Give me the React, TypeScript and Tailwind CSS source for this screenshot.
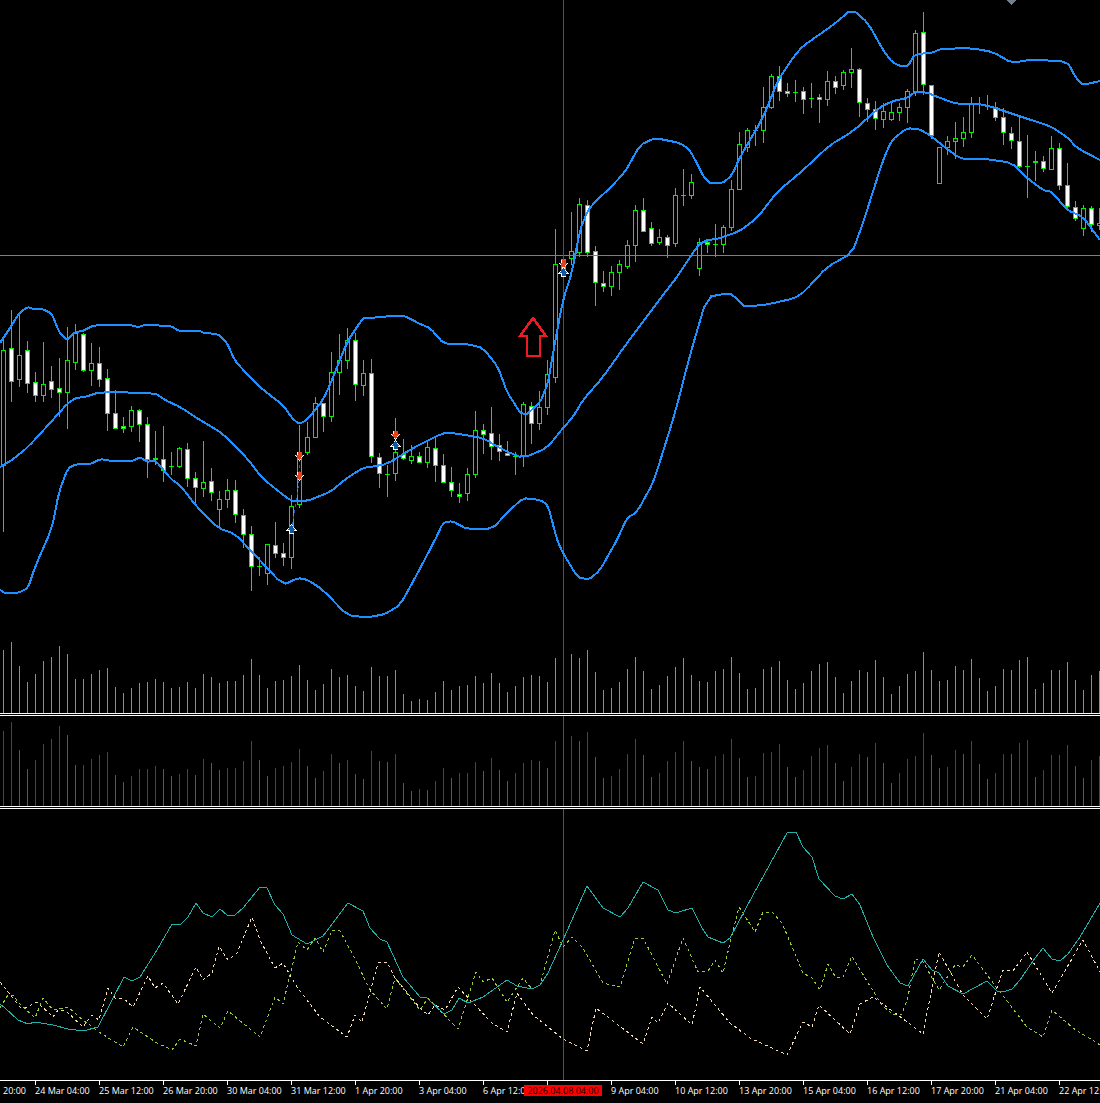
const CANDLES: [number, number, number, number, number][] = [
[340,350,465,532,0],[310,348,381,402,1],[315,355,379,387,0],[341,350,383,393,1],[372,382,395,402,1],[342,384,395,402,0],[366,381,389,398,1],[358,388,392,417,1],
[327,360,392,429,0],[324,333,362,370,0],[333,334,370,372,1],[343,363,370,386,0],[347,363,379,387,1],[369,378,413,431,1],[390,413,428,429,1],[417,426,428,433,1],
[406,410,426,432,0],[409,410,424,442,1],[417,424,459,478,1],[431,458,459,465,0],[426,459,470,482,1],[452,466,466,475,0],[447,448,466,468,0],[443,449,478,487,1],
[472,478,487,503,1],[441,482,488,497,0],[468,481,492,501,1],[491,499,509,527,0],[479,490,499,508,0],[480,490,514,523,1],[509,515,534,548,1],[526,534,566,591,1],
[557,566,566,576,0],[544,544,573,585,0],[522,545,553,558,1],[543,553,557,566,1],[495,506,557,569,0],[425,452,504,508,0],[422,437,452,455,0],[397,403,437,438,0],
[403,403,416,432,1],[352,372,416,422,0],[334,360,372,395,0],[328,340,360,369,0],[333,340,384,401,1],[360,373,385,396,0],[359,373,456,463,1],[453,457,473,488,1],
[465,474,474,497,0],[418,452,473,481,0],[439,454,458,460,1],[445,456,460,464,0],[452,456,462,463,1],[441,447,462,468,0],[438,448,465,482,1],[454,465,482,483,1],
[467,482,490,497,1],[483,494,496,503,1],[468,474,493,501,0],[411,430,474,478,0],[424,430,434,454,1],[407,433,446,460,1],[434,445,451,461,1],[441,453,455,456,1],
[452,456,456,475,0],[402,404,456,467,0],[402,406,423,444,1],[391,407,423,430,0],[360,374,407,415,0],[229,264,377,383,0],[258,259,274,280,0],[212,251,258,265,0],
[198,204,252,257,0],[200,205,252,257,1],[246,251,282,306,1],[271,283,286,292,1],[266,272,286,296,0],[260,264,272,290,0],[240,245,266,269,0],[205,210,245,262,0],
[198,210,231,232,1],[222,228,243,246,1],[229,237,242,245,0],[235,237,245,258,1],[188,195,243,247,0],[169,195,195,206,0],[174,182,195,199,0],[238,242,268,276,0],
[240,242,244,253,1],[224,244,244,257,0],[225,227,244,253,0],[180,189,227,231,0],[132,144,189,190,0],[128,130,147,152,0],[125,130,130,146,0],[87,107,130,143,0],
[74,76,107,109,0],[66,76,91,101,1],[83,91,93,97,1],[80,92,92,102,0],[87,91,99,114,1],[83,98,98,108,0],[94,97,99,123,1],[71,81,99,106,0],[76,81,87,94,1],
[70,72,85,90,0],[48,69,72,88,0],[68,69,102,117,1],[98,103,109,122,1],[101,109,118,130,1],[103,111,119,128,0],[102,112,119,121,0],[103,107,112,121,0],[89,91,107,123,0],
[30,33,91,96,0],[12,32,84,95,1],[85,85,135,139,1],[147,147,183,184,0],[136,141,147,155,0],[122,138,141,159,0],[117,132,138,147,0],[97,104,132,138,0],[97,104,104,114,0],
[95,106,106,110,0],[102,107,117,121,1],[108,117,132,145,1],[127,133,140,149,1],[117,141,166,168,1],[135,166,166,198,0],[151,161,162,181,0],[156,161,168,172,1],
[136,148,169,169,0],[143,148,185,190,1],[163,185,206,208,1],[201,207,218,221,1],[205,208,228,236,0],[206,208,224,232,1],[208,223,225,230,0],
];

const V1 = [30,7,78,126,102,63,51,18,42,117,117,102,90,84,141,159,144,129,126,117,126,144,141,126,144,102,111,129,123,123,105,57,105,144,123,120,108,75,120,150,132,87,111,105,138,153,81,108,108,90,162,183,177,180,156,123,150,138,135,108,129,99,129,156,138,111,105,108,126,54,45,42,54,30,96,150,144,126,87,51,93,147,135,108,81,54,105,123,126,93,87,51,99,147,144,87,81,63,120,147,129,93,72,66,111,159,123,90,96,60,111,162,138,102,93,36,90,123,120,78,90,57,114,153,138,87,90,60,51,147,129,90,90,66,120,150,105,93];
const V2 = [273,246,330,387,360,312,297,258,285,375,375,357,345,336,405,426,408,387,387,378,387,408,402,387,405,357,369,390,384,384,363,303,360,408,384,378,366,327,378,414,393,342,369,360,402,417,333,363,366,342,429,453,447,450,423,384,414,399,399,366,393,354,390,423,399,369,360,363,384,303,290,288,303,276,351,414,408,387,342,297,345,411,399,363,336,303,363,381,387,348,342,297,354,411,408,339,336,312,381,411,390,348,324,315,369,423,381,342,351,309,369,429,399,357,348,279,345,384,381,330,342,303,372,417,399,342,342,309,300,411,390,345,345,315,378,414,360,348];
const RED = new Set([2,3,8,9,14,15,20,21,24,26,27,32,33,38,39,42,44,45,47,48,50,51,53,56,60,62,63,67,68,72,74,75,80,81,86,87,88,92,93,98,99,104,105,108,110,111,116,117,120,122,123,126,129,134,135]);

const UPPER = "0,343 10,328 20,312 28,307 33,309 43,309 52,314 59,332 67,340 75,332 83,331 92,326 100,325 130,325 138,327 145,325 172,326 178,331 200,331 204,333 218,334 227,343 235,361 248,375 262,389 283,405 292,418 299,424 307,420 323,400 332,380 347,342 363,318 370,318 403,315 420,324 430,328 444,344 467,344 483,348 498,367 507,392 523,417 540,403 548,383 555,342 563,300 572,272 580,230 588,210 597,200 610,188 625,172 640,145 655,138 680,143 690,150 707,183 723,183 732,175 740,157 763,118 778,80 795,55 803,46 833,25 852,9 868,23 883,50 892,62 900,66 908,66 915,54 932,53 940,49 970,48 993,52 1012,63 1028,60 1067,61 1076,78 1083,85 1100,81";
const MIDDLE = "0,467 12,460 28,447 50,423 68,403 76,398 85,397 100,392 155,393 165,400 180,407 200,420 222,433 247,458 262,478 287,498 293,501 307,501 330,492 347,478 363,468 370,467 387,464 413,448 443,433 453,433 483,438 503,450 523,458 547,448 563,428 573,417 583,400 603,377 627,343 663,295 677,277 698,245 707,240 717,239 740,231 758,217 777,192 800,173 830,145 852,132 880,107 893,101 907,98 915,92 925,92 943,99 957,104 983,104 1028,119 1050,126 1067,137 1077,148 1100,160";
const LOWER = "0,590 5,593 18,593 28,588 35,567 52,528 59,492 68,468 77,464 91,464 100,459 112,461 133,461 140,457 147,462 155,460 172,480 180,485 197,507 218,528 235,534 253,553 283,585 298,578 308,580 323,590 348,616 370,617 385,614 400,605 415,578 435,540 443,523 452,521 467,529 492,529 508,512 523,498 540,500 548,505 557,540 563,553 578,578 590,579 600,570 617,540 627,518 637,512 653,483 662,455 675,413 690,355 707,297 730,293 738,300 745,307 770,304 795,298 805,291 827,267 852,253 863,223 883,160 892,140 907,128 923,130 955,155 963,159 987,159 1012,163 1027,178 1043,190 1052,192 1067,210 1083,217 1100,240";

const TEAL = "0,1004 5,1008 18,1020 28,1024 35,1022 53,1025 68,1029 83,1031 98,1027 124,977 132,981 140,977 157,950 172,924 180,925 188,917 196,903 203,913 212,917 220,909 227,915 235,915 243,908 260,887 267,888 275,905 283,914 292,935 307,944 323,936 348,903 363,911 370,928 380,939 387,942 403,977 420,997 427,998 444,1014 452,1010 459,998 468,1003 483,997 507,980 517,986 532,989 540,985 548,973 563,940 587,886 603,908 620,917 628,908 643,882 658,890 668,910 676,913 692,908 702,928 708,937 723,943 730,938 753,895 787,833 796,832 803,847 812,857 819,879 835,896 843,899 852,894 860,905 873,937 887,965 900,983 908,986 923,959 932,970 939,973 948,986 963,994 987,981 997,991 1003,992 1012,989 1020,980 1035,958 1043,948 1052,959 1060,961 1068,954 1080,937 1100,903";
const YELLOW = "0,1008 8,995 13,995 18,1002 35,1018 43,998 53,1010 68,1007 83,1020 99,1032 123,1047 133,1027 157,1043 172,1050 180,1039 196,1046 203,1014 220,1028 228,1011 260,1037 275,997 283,1004 298,942 307,950 315,938 323,952 332,930 340,931 353,955 370,990 387,1009 395,978 420,1010 428,998 458,1029 476,972 483,982 492,978 507,1002 523,978 532,989 540,985 555,930 563,947 572,937 583,948 603,983 620,987 635,938 643,938 667,984 683,938 698,972 708,971 715,960 723,973 730,943 739,907 755,932 763,912 772,912 782,923 803,973 812,978 820,990 828,964 836,978 843,977 852,956 868,983 882,1005 893,1015 902,1014 908,997 915,959 923,962 939,990 955,965 963,967 972,955 997,988 1027,1027 1043,1037 1052,1010 1073,1028 1100,1045";
const WHEAT = "0,982 20,1007 27,1007 37,1002 53,1017 58,1010 65,1010 83,1027 92,1015 99,1020 108,988 115,998 123,998 133,1007 148,976 155,988 163,983 178,1004 196,967 203,980 212,973 219,946 228,960 237,953 252,917 260,940 275,968 283,963 297,987 320,1017 347,1037 355,1015 362,1022 370,992 378,963 387,962 395,978 420,1008 428,1015 435,1005 445,1010 458,987 492,1023 507,1032 517,993 533,1015 563,1039 587,1051 596,1008 643,1044 652,1017 658,1023 668,1003 692,1025 700,987 730,1023 750,1038 787,1055 803,1022 812,1027 819,1005 850,1034 860,1004 873,997 902,1018 923,1034 939,952 963,995 987,1019 1003,970 1013,971 1027,952 1052,993 1083,940 1100,972";

const LABELS = ["24 Mar 04:00","25 Mar 12:00","26 Mar 20:00","30 Mar 04:00","31 Mar 12:00","1 Apr 20:00","3 Apr 04:00","6 Apr 12:00","","9 Apr 04:00","10 Apr 12:00","13 Apr 20:00","15 Apr 04:00","16 Apr 12:00","17 Apr 20:00","21 Apr 04:00","22 Apr 12:00"];

const CROSS = "#f01010";
const GREEN = "#00f000";

// Softens the corners of a band line so that it reads as a curve.
function soften(points: string, r = 0.18): string {
  const p = points.split(" ").map((s) => s.split(",").map(Number));
  const out: string[] = [p[0].join(",")];
  for (let i = 0; i < p.length - 1; i++) {
    const [x0, y0] = p[i];
    const [x1, y1] = p[i + 1];
    out.push(`${x0 + (x1 - x0) * r},${y0 + (y1 - y0) * r}`);
    out.push(`${x1 - (x1 - x0) * r},${y1 - (y1 - y0) * r}`);
  }
  out.push(p[p.length - 1].join(","));
  return out.join(" ");
}

function Marker({ x, y, kind }: { x: number; y: number; kind: "up" | "down" }) {
  const pts =
    kind === "down"
      ? `${x - 1.5},${y - 4} ${x + 2.5},${y - 4} ${x + 2.5},${y - 1} ${x + 4.5},${y - 1} ${x + 0.5},${y + 4} ${x - 3.5},${y - 1} ${x - 1.5},${y - 1}`
      : `${x - 1.5},${y + 4} ${x + 2.5},${y + 4} ${x + 2.5},${y + 1} ${x + 4.5},${y + 1} ${x + 0.5},${y - 4} ${x - 3.5},${y + 1} ${x - 1.5},${y + 1}`;
  const fill = kind === "down" ? "#e8401c" : "#0f5aa8";
  return (
    <g>
      <polygon points={pts} fill="#ffffff" stroke="#ffffff" strokeWidth={1} />
      <polygon points={pts} fill={fill} />
    </g>
  );
}

function MainChart() {
  return (
    <svg width={1100} height={713} viewBox="0 0 1100 713" shapeRendering="crispEdges" className="block flex-none">
      {V1.map((y, i) => (
        <rect key={i} x={3 + 8 * i} y={640 + y / 3} width={1} height={(220 - y) / 3} fill="#3cc83c" />
      ))}
      {CANDLES.map(([hi, top, bot, lo, filled], i) => {
        const cx = 3 + 8 * i;
        return (
          <g key={i}>
            <rect x={cx} y={hi} width={1} height={lo - hi} fill={GREEN} />
            {bot - top < 1 ? (
              <rect x={cx - 2} y={top} width={5} height={1} fill={GREEN} />
            ) : (
              <rect x={cx - 1.5} y={top + 0.5} width={4} height={bot - top} fill={filled ? "#ffffff" : "#000000"} stroke={GREEN} strokeWidth={1} />
            )}
          </g>
        );
      })}
      <rect x={0} y={255} width={1100} height={1} fill="#808080" />
      <rect x={563} y={0} width={1} height={713} fill={CROSS} />
      <polyline points="292.5,525 299.5,478" fill="none" stroke="#1a5fa8" strokeWidth={1} strokeDasharray="3 3" />
      <polyline points="299.5,474 299.5,459" fill="none" stroke="#1a5fa8" strokeWidth={1} strokeDasharray="3 3" />
      <polyline points={soften(UPPER)} fill="none" stroke="#1e90ff" strokeWidth={2} />
      <polyline points={soften(MIDDLE)} fill="none" stroke="#1e90ff" strokeWidth={2} />
      <polyline points={soften(LOWER)} fill="none" stroke="#1e90ff" strokeWidth={2} />
      <Marker x={299} y={456} kind="down" />
      <Marker x={299} y={476} kind="down" />
      <Marker x={291} y={529} kind="up" />
      <Marker x={395} y={435} kind="down" />
      <Marker x={395} y={445} kind="up" />
      <Marker x={563} y={264} kind="down" />
      <Marker x={563} y={272} kind="up" />
      <polygon points="533,318 520,336 527,336 527,356 540,356 540,336 546,336" fill="none" stroke="#ed1c24" strokeWidth={2.5} strokeLinejoin="miter" />
      <polygon points="1006,0 1016,0 1011,5" fill="#708090" />
    </svg>
  );
}

function VolumePanel() {
  return (
    <svg width={1100} height={90} viewBox="0 716 1100 90" shapeRendering="crispEdges" className="block flex-none">
      {V2.map((y, i) => (
        <rect key={i} x={3 + 8 * i} y={640 + y / 3} width={1} height={(498 - y) / 3} fill={RED.has(i) ? "#f01818" : "#0a720a"} />
      ))}
      <rect x={563} y={716} width={1} height={90} fill={CROSS} />
    </svg>
  );
}

function Oscillator() {
  return (
    <svg width={1100} height={271} viewBox="0 809 1100 271" shapeRendering="crispEdges" className="block flex-none">
      <rect x={563} y={809} width={1} height={271} fill={CROSS} />
      <polyline points={WHEAT} fill="none" stroke="#f5deb3" strokeWidth={1} strokeDasharray="3 3" />
      <polyline points={YELLOW} fill="none" stroke="#9acd32" strokeWidth={1} strokeDasharray="3 3" />
      <polyline points={TEAL} fill="none" stroke="#20b2aa" strokeWidth={1} />
    </svg>
  );
}

export default function App() {
  return (
    <div className="w-[1100px] h-[1103px] bg-black flex flex-col overflow-hidden font-['Open_Sans',sans-serif] text-white text-[9px] leading-[11px]">
      <MainChart />
      <div className="h-px bg-white flex-none" />
      <div className="h-px flex-none" />
      <div className="h-px bg-white flex-none" />
      <VolumePanel />
      <div className="h-px bg-white flex-none" />
      <div className="h-px flex-none" />
      <div className="h-px bg-white flex-none" />
      <Oscillator />
      <div className="relative flex-1 border-t border-white">
        <div className="flex h-1 pl-[35px]">
          {LABELS.map((l, i) => (
            <div key={i} className="w-16 flex-none border-l border-white" />
          ))}
        </div>
        <div className="flex whitespace-nowrap">
          <div className="w-[35px] flex-none pl-[3px]">20:00</div>
          {LABELS.map((l, i) => (
            <div key={i} className="w-16 flex-none">{l}</div>
          ))}
        </div>
        <div className="absolute left-[524px] top-[4px] w-[78px] h-[11px] bg-[#ff0000] text-black text-center">2026.04.08 04:00</div>
      </div>
    </div>
  );
}
